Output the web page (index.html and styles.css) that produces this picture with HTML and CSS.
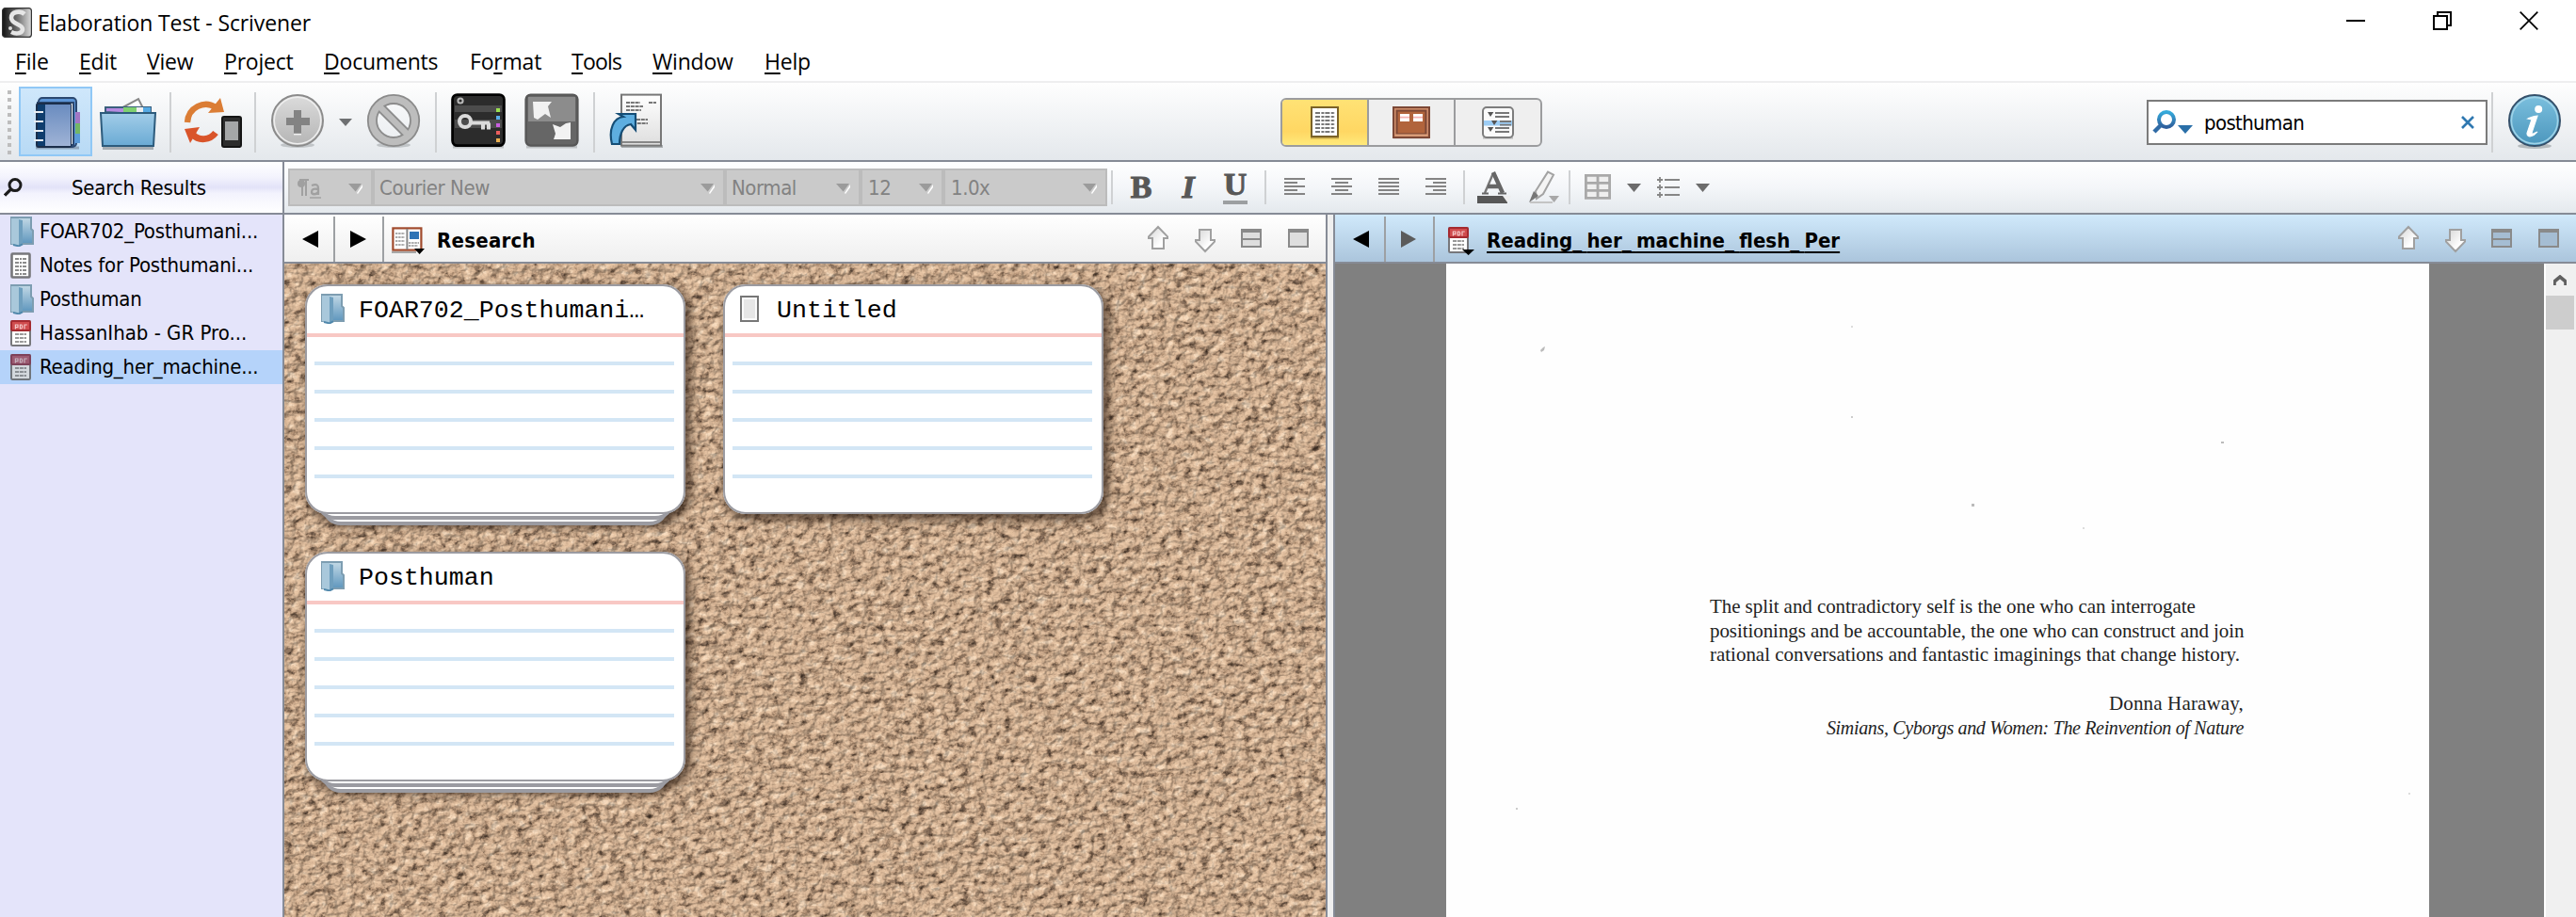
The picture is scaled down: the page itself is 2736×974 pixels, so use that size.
FILE: index.html
```html
<!DOCTYPE html>
<html lang="en">
<head>
<meta charset="utf-8">
<title>Elaboration Test - Scrivener</title>
<link rel="stylesheet" href="styles.css">
</head>
<body>
<svg class="defs" width="0" height="0" aria-hidden="true">
  <defs>
    <linearGradient id="gFolder" x1="0" y1="0" x2="0" y2="1"><stop offset="0" stop-color="#c3d9e6"/><stop offset="1" stop-color="#5e96bd"/></linearGradient>
    <linearGradient id="gBlue" x1="0" y1="0" x2="0" y2="1"><stop offset="0" stop-color="#a2cde8"/><stop offset="1" stop-color="#6aaad4"/></linearGradient>
    <linearGradient id="gBook" x1="0" y1="0" x2="0" y2="1"><stop offset="0" stop-color="#6a8cc0"/><stop offset="1" stop-color="#9fb3d6"/></linearGradient>
    <linearGradient id="gGrey" x1="0" y1="0" x2="0" y2="1"><stop offset="0" stop-color="#dcdcdc"/><stop offset="1" stop-color="#b4b4b4"/></linearGradient>
    <linearGradient id="gPaper" x1="0" y1="0" x2="0" y2="1"><stop offset="0" stop-color="#fff"/><stop offset="1" stop-color="#dedede"/></linearGradient>
    <linearGradient id="gInfo" x1="0" y1="0" x2="0" y2="1"><stop offset="0" stop-color="#7cc0de"/><stop offset="1" stop-color="#4b96bd"/></linearGradient>
    <linearGradient id="gArrow" x1="0" y1="0" x2="1" y2="1"><stop offset="0" stop-color="#d4d4d4"/><stop offset=".7" stop-color="#fff"/></linearGradient>
    <symbol id="folder" viewBox="0 0 13 16"><path d="M1 .5h10.500v6l1 1v7H1z" fill="url(#gFolder)" stroke="#7d9db1"/><path d="M1 1h4v14.500l-4-1z" fill="#a9c8db"/><path d="M5 1.500l2 .5v12.500l-2 1z" fill="#6f9fbe"/><path d="M2 15l3 .7 2-1" stroke="#4f87ab" fill="none"/></symbol>
    <symbol id="text" viewBox="0 0 11 14"><rect x=".75" y=".75" width="9.500" height="12.500" rx=".5" fill="#fff" stroke="#77777b" stroke-width="1.300"/><path d="M2.500 3.500h6M2.500 5.500h6M2.500 7.500h6M2.500 9.500h6M2.500 11.500h6" stroke="#8b8b8b" stroke-dasharray="2 .5 1 .5" /></symbol>
    <symbol id="pdf" viewBox="0 0 11 14"><rect x=".5" y=".5" width="10" height="13" rx=".6" fill="#fff" stroke="#77777b"/><path d="M2.500 7.500h6M2.500 9.500h6M2.500 11.500h6" stroke="#999" stroke-dasharray="2 .4"/><rect x=".5" y=".5" width="10" height="5" rx=".6" fill="#d04c4e" stroke="#a52a30"/><path d="M2.700 4.800v-2.300h1.300v1.300h-1M5.200 2.500v2h.8l.4-1-.4-1zM7.500 4.800v-2.300h1.400" stroke="#f3c9c9" stroke-width=".6" fill="none"/></symbol>
    <symbol id="up" viewBox="0 0 12 14"><path d="M6 1L11 6.200V7H9V12.500H3V7H1V6.200z" fill="url(#gArrow)" stroke="#a0a0a0"/></symbol>
    <symbol id="down" viewBox="0 0 12 14"><path d="M6 13L11 7.800V7H9V1.500H3V7H1V7.800z" fill="url(#gArrow)" stroke="#a0a0a0"/></symbol>
    <symbol id="split" viewBox="0 0 11 10"><path d="M.5 .5h10v9H.5zM.5 5.500h10" fill="var(--pane-fill)" stroke="#8a8a8a"/><path d="M0 1h11" stroke="#8a8a8a" stroke-width="2"/></symbol>
    <symbol id="single" viewBox="0 0 11 10"><path d="M.5 .5h10v9H.5z" fill="var(--pane-fill)" stroke="#8a8a8a"/><path d="M0 1h11" stroke="#8a8a8a" stroke-width="2"/></symbol>
    <symbol id="drop" viewBox="0 0 8 6"><path d="M4.500 5.500L7.500 1v1.500L5 6z" fill="#fff"/><path d="M0 .5h7L3.800 4.800z" fill="#9b9b9b"/></symbol>
  </defs>
</svg>

<header class="titlebar">
  <svg class="app-icon" viewBox="0 0 16 16"><defs><linearGradient id="gApp"><stop offset="0" stop-color="#111"/><stop offset=".55" stop-color="#777"/><stop offset="1" stop-color="#ddd"/></linearGradient></defs><rect x=".3" y=".3" width="15.400" height="15.400" rx="1.500" fill="url(#gApp)" stroke="#333" stroke-width=".6"/><path d="M12 3.500C10 1.500 5 2 5 5.500c0 3.500 6 3 6 6 0 2-3 3-6 1.500" fill="none" stroke="#e6e6e6" stroke-width="2.300"/><circle cx="4.500" cy="11" r="1" fill="#ddd"/></svg>
  <span class="title">Elaboration Test - Scrivener</span>
  <div class="win-buttons">
    <svg viewBox="0 0 20 20"><path d="M0 10h20" stroke="#000" stroke-width="2"/></svg>
    <svg viewBox="0 0 20 20"><path d="M1 5h14v14H1zM5 5V1h14v14h-4" fill="none" stroke="#000" stroke-width="2"/></svg>
    <svg viewBox="0 0 20 20"><path d="M.7.7l18.600 18.600M19.300.7L.7 19.300" stroke="#000" stroke-width="1.700"/></svg>
  </div>
</header>
<nav class="menu">
  <span><u>F</u>ile</span><span><u>E</u>dit</span><span><u>V</u>iew</span><span><u>P</u>roject</span><span><u>D</u>ocuments</span><span>Fo<u>r</u>mat</span><span class="tight"><u>T</u>ools</span><span><u>W</u>indow</span><span><u>H</u>elp</span>
</nav>

<div class="toolbar">
  <div class="grip"></div>
  <div class="tool active">
    <svg width="54" height="58" viewBox="0 0 27 29"><path d="M2 27.500h23" stroke="#8fa5bb" stroke-width="1.500"/><rect x="3.500" y="1" width="20" height="26" rx="2" fill="#5b94d6" stroke="#2b4870"/><path d="M23 8.500h2.500v7H23z" fill="#a377c4"/><path d="M23 14.500h2.500v7H23z" fill="#74b766"/><path d="M23 20h2.500v5H23z" fill="#5b9bd8"/><path d="M3 3.500h19V26H3z" fill="#fff" stroke="#2b4870"/><rect x="2.500" y="4" width="18" height="23" rx="1" fill="#0f3d6d" stroke="#1b2e4a"/><path d="M7 4.500h13.500v22H7z" fill="url(#gBook)"/><path d="M1 8.500h5M1 13.500h5M1 18.500h5M1 23.500h5" stroke="#e9eef3" stroke-width="1.100"/></svg>
  </div>
  <svg class="i-folder" width="62" height="58" viewBox="0 0 31 29"><path d="M9 8l12-6.500 4 8" fill="#fff" stroke="#888"/><path d="M2 27.500h27" stroke="#a6adb3" stroke-width="2"/><path d="M3.500 8.500V6h24v4z" fill="#b58be0" stroke="#3a5f7d"/><path d="M13 6h7v4h-7z" fill="#7fd070"/><path d="M20 6h3.500v4H20z" fill="#eee"/><path d="M23.500 6h4v4h-4z" fill="#55a9e3"/><path d="M1 9h29l-1 17.500H2z" fill="url(#gBlue)" stroke="#2d5b7c"/></svg>
  <i class="sep s1"></i>
  <svg class="i-sync" width="62" height="56" viewBox="0 0 31 28"><path d="M2 14C2.500 6 11 2 17 6" fill="none" stroke="#db7d35" stroke-width="3.200"/><path d="M19.500 1l2 7.500-8.500.5z" fill="#db7d35"/><path d="M17 19.500c-3 4-9 4.500-12 1" fill="none" stroke="#d9542a" stroke-width="3.500"/><path d="M.5 17.500l8-1-5 8.500z" fill="#d9542a"/><rect x="20.500" y="11" width="10" height="16" rx="1" fill="#2d2d2d" stroke="#151515"/><path d="M22 13.500h7v10h-7z" fill="#a5a7a8"/></svg>
  <i class="sep s2"></i>
  <svg class="i-add" width="58" height="60" viewBox="0 0 29 30"><ellipse cx="14.500" cy="27.500" rx="9" ry="1.500" fill="#c1c5c8"/><circle cx="14.500" cy="14.500" r="13.500" fill="url(#gGrey)" stroke="#8b8b8b"/><circle cx="14.500" cy="14.500" r="12.400" fill="none" stroke="#eee" stroke-width=".8"/><path d="M12.500 9h4v4H21v4h-4.500v4.500h-4V17H8.500v-4h4z" fill="#838383"/><path d="M12.500 21.800h4" stroke="#f2f2f2" stroke-width=".8"/></svg>
  <svg class="i-caret" width="14" height="8" viewBox="0 0 14 8"><path d="M0 0h14L7 8z" fill="#6e7072"/></svg>
  <svg class="i-ban" width="58" height="60" viewBox="0 0 29 30"><ellipse cx="14.500" cy="27.500" rx="9" ry="1.500" fill="#c1c5c8"/><circle cx="14.500" cy="14.500" r="11.300" fill="none" stroke="#8b8b8b" stroke-width="5.500"/><path d="M7 7l15 15" stroke="#8b8b8b" stroke-width="5"/><circle cx="14.500" cy="14.500" r="11.300" fill="none" stroke="#bdbdbd" stroke-width="3.700"/><path d="M6.500 6.500l16 16" stroke="#bdbdbd" stroke-width="3.200"/></svg>
  <i class="sep s3"></i>
  <svg class="i-key" width="58" height="60" viewBox="0 0 29 30"><path d="M1 28.500h27" stroke="#bfc3c6" stroke-width="1.500"/><rect x=".8" y=".8" width="27.400" height="27" rx="2.500" fill="#2c2c2c" stroke="#000" stroke-width="1.400"/><path d="M2 6.500h25v3.500H2zM2 14h25v4.500H2z" fill="#4c4c4c"/><circle cx="5" cy="4" r="1.300" fill="none" stroke="#bbb"/><circle cx="7.500" cy="15" r="3" fill="none" stroke="#dadada" stroke-width="2"/><path d="M10.500 15.800h10M17 15.800v3.500M20 15.800v3.500" stroke="#dadada" stroke-width="2"/><path d="M24 8h2v2h-2z" fill="#9be152"/><path d="M24 12h2v2h-2z" fill="#59ade8"/><path d="M24 16h2v2h-2z" fill="#c95fe0"/><path d="M24 20h2v2h-2z" fill="#ec5e5e"/><path d="M24 24h2v2h-2z" fill="#eab050"/></svg>
  <svg class="i-full" width="58" height="60" viewBox="0 0 29 30"><path d="M1 28.500h27" stroke="#bfc3c6" stroke-width="1.500"/><rect x=".8" y=".8" width="27.400" height="27" rx="2.500" fill="#666" stroke="#575757" stroke-width="1.200"/><path d="M2 2h25v13H2z" fill="#8c8c8c"/><path d="M4.500 4.500h10l-2 2.500 1.500 6-3-2-4 3-2-1z" fill="#f2f2f2"/><path d="M24.500 24.500h-9l1-3-1.500-5 4 1.500 3-2 2.500-.5z" fill="#f2f2f2"/></svg>
  <i class="sep s4"></i>
  <svg class="i-doc" width="60" height="60" viewBox="0 0 30 30"><path d="M7 28.300h22" stroke="#a9adb0" stroke-width="1.500"/><rect x="7" y=".8" width="21" height="27" fill="url(#gPaper)" stroke="#777"/><path d="M7.500 26h20" stroke="#888"/><path d="M9.500 5h7.500M21.500 5h4M9.500 7h9M9.500 9h8M15 14h6M13 16h8" stroke="#777" stroke-dasharray="2 .4"/><path d="M2 27C0 19 3 13 8 12.500L5.500 11h9v8.500l-2.500-3c-4 .5-6 5-6 10.500z" fill="#5eaee0" stroke="#154d75" stroke-width="1.100"/></svg>

  <div class="segmented">
    <span class="seg on"><svg width="34" height="36" viewBox="0 0 17 18"><path d="M1 17.300h15" stroke="#c6a94a"/><rect x="1.500" y="1" width="14" height="15.500" fill="#fff" stroke="#7b6227"/><path d="M3.500 4h10.500M3.500 6h10.500M3.500 8h10.500M3.500 10h10.500M3.500 12h10.500M3.500 14h10.500" stroke="#777" stroke-dasharray="2.500 .7 1.500 .5"/></svg></span>
    <span class="seg"><svg width="42" height="36" viewBox="0 0 21 18"><path d="M1 17.300h19" stroke="#cfc8c5"/><rect x="1" y="1" width="19" height="16" fill="#cf8d6b" stroke="#7c4836"/><rect x="2.800" y="2.800" width="15.400" height="12.400" fill="#b1643c" stroke="#7c4836"/><path d="M4.500 4.500h5v4h-5zM11.500 4.500h5v4h-5z" fill="#fff"/><path d="M4.500 6.300h5M11.500 6.300h5" stroke="#f5b3b3" stroke-width=".8"/><path d="M2 15.700h17" stroke="#dca07c"/></svg></span>
    <span class="seg"><svg width="36" height="36" viewBox="0 0 18 18"><path d="M1 17.300h16" stroke="#bbb"/><rect x="1" y="1" width="16" height="16" rx="2" fill="#fafafa" stroke="#7d7d7d"/><path d="M1.500 8h15v2.700h-15z" fill="#9dcdf5"/><path d="M7.500 4h7.500M7.500 6h7.500M10 8.500h6M10 10.300h6M7.500 12h7.500M7.500 14h7.500" stroke="#777" stroke-width=".9"/><path d="M3.500 3.500h3.200L5 6zM5.500 8h3.200L7 10.500zM3.500 11.500h3.200L5 14z" fill="#555"/></svg></span>
  </div>

  <div class="search">
    <svg width="44" height="28" viewBox="0 0 44 28"><defs><linearGradient id="gMag" x1="0" y1="0" x2="0" y2="1"><stop offset="0" stop-color="#35aadb"/><stop offset="1" stop-color="#2f5f9c"/></linearGradient></defs><circle cx="15" cy="11" r="8" fill="none" stroke="url(#gMag)" stroke-width="4"/><path d="M9 17L2 24" stroke="#2f6aa5" stroke-width="4.500"/><path d="M27 17h16l-8 9z" fill="#2a6fa8"/></svg>
    <span class="query">posthuman</span>
    <svg width="14" height="14" viewBox="0 0 14 14"><path d="M1 1l12 12M13 1L1 13" stroke="#2f78b0" stroke-width="2.600"/></svg>
  </div>
  <i class="sep s5"></i>
  <svg class="i-info" width="58" height="60" viewBox="0 0 29 30"><ellipse cx="14.500" cy="28" rx="9" ry="1.500" fill="#b5babd"/><circle cx="14.500" cy="14.500" r="13.500" fill="url(#gInfo)" stroke="#35506a"/><circle cx="14.500" cy="14.500" r="12.300" fill="none" stroke="#9fd3e8" stroke-width=".8"/><circle cx="16.600" cy="8.500" r="2" fill="#fff"/><path d="M11 13.500c2-.8 3.500-1.500 5-1.500l-3 9c0 1 1 .5 3-.5-2 2.500-5.500 3.500-5.500.8l2.500-7.300z" fill="#fff" stroke="#fff" stroke-width=".6"/></svg>
</div>

<main class="workspace">
  <aside class="sidebar">
    <div class="side-head">
      <svg width="20" height="20" viewBox="0 0 10 10"><circle cx="6" cy="3.800" r="3" fill="none" stroke="#1c1c1c" stroke-width="1.500"/><path d="M3.800 6L.5 9.300" stroke="#1c1c1c" stroke-width="1.600"/></svg>
      <span>Search Results</span>
    </div>
    <ul class="results">
      <li><svg class="fo"><use href="#folder"/></svg><span>FOAR702_Posthumani...</span></li>
      <li><svg class="tx"><use href="#text"/></svg><span>Notes for Posthumani...</span></li>
      <li><svg class="fo"><use href="#folder"/></svg><span>Posthuman</span></li>
      <li><svg class="tx"><use href="#pdf"/></svg><span class="loose">HassanIhab - GR Pro...</span></li>
      <li class="sel"><svg class="tx"><use href="#pdf"/></svg><span>Reading_her_machine...</span></li>
    </ul>
  </aside>

  <section class="content">
    <div class="format">
      <div class="combo c1"><svg class="pilcrow" width="26" height="22" viewBox="0 0 26 22"><path d="M9 1v18M5 1v18M2 2h10" stroke="#a0a0a0" stroke-width="2"/><circle cx="4" cy="6" r="4" fill="#a0a0a0"/><path d="M15 8c6-2 7 0 7 3v7M22 12c-5-1-7 0-7 3s5 3 7 0" stroke="#a0a0a0" stroke-width="2.300" fill="none"/><path d="M13 21h12" stroke="#a0a0a0" stroke-width="1.500"/></svg><svg class="dd"><use href="#drop"/></svg></div>
      <div class="combo c2"><span>Courier New</span><svg class="dd"><use href="#drop"/></svg></div>
      <div class="combo c3"><span>Normal</span><svg class="dd"><use href="#drop"/></svg></div>
      <div class="combo c4"><span>12</span><svg class="dd"><use href="#drop"/></svg></div>
      <div class="combo c5"><span>1.0x</span><svg class="dd"><use href="#drop"/></svg></div>
      <i class="fsep f1"></i>
      <b class="fb">B</b><b class="fi">I</b><b class="fu">U</b>
      <i class="fsep f2"></i>
      <svg class="al" viewBox="0 0 11 10"><path d="M0 .5h11M0 2.500h7M0 4.500h11M0 6.500h7M0 8.500h11" stroke="#848484"/></svg>
      <svg class="al" viewBox="0 0 11 10"><path d="M0 .5h11M2 2.500h7M0 4.500h11M2 6.500h7M0 8.500h11" stroke="#848484"/></svg>
      <svg class="al" viewBox="0 0 11 10"><path d="M0 .5h11M0 2.500h11M0 4.500h11M0 6.500h11M0 8.500h11" stroke="#848484"/></svg>
      <svg class="al" viewBox="0 0 11 10"><path d="M0 .5h11M4 2.500h7M0 4.500h11M4 6.500h7M0 8.500h11" stroke="#848484"/></svg>
      <i class="fsep f3"></i>
      <svg class="fa" width="36" height="36" viewBox="0 0 18 18"><path d="M4 12L8.500 1.500" fill="none" stroke="#777" stroke-width="1.200"/><path d="M8.500 1L13.500 12M5.500 8.500h6" fill="none" stroke="#666" stroke-width="2.200"/><path d="M2.500 12.300h3.500M11 12.300h4.500" stroke="#666"/><path d="M0 13.500h16v4H0z" fill="#575757"/><path d="M13.500 13.500h4.500l-2 3.500z" fill="#eee"/></svg>
      <svg class="fp" width="34" height="36" viewBox="0 0 17 18"><path d="M4.500 11L11 .8l3 1.500L8.500 12.500l-3.500 2.500z" fill="#f4f4f4" stroke="#a3a3a3"/><path d="M1 17l2.500-6 2.500 2.500z" fill="#777"/><path d="M1.500 17h12" stroke="#c4c4c4"/><path d="M11.500 13.500h5.500l-2.700 3.500z" fill="#a8a8a8"/></svg>
      <i class="fsep f4"></i>
      <svg class="ft" width="28" height="28" viewBox="0 0 14 14"><path d="M.7.7h12.600v12H.7zM7 .7v12M.7 4.700h12.600M.7 8.700h12.600" fill="#efefef" stroke="#a9a9a9" stroke-width="1.400"/></svg>
      <svg class="fc" width="15" height="9" viewBox="0 0 15 9"><path d="M0 0h15L7.500 9z" fill="#6c6c6c"/></svg>
      <svg class="fl" width="24" height="22" viewBox="0 0 12 11"><path d="M4 1.500h8M4 5.500h8M4 9.500h8" stroke="#868686"/><path d="M0 1.500h3M1.500 0v3M0 5.500h3M1.500 4v3M0 9.500h3M1.500 8v3" stroke="#868686" stroke-width=".9"/></svg>
      <svg class="fc" width="15" height="9" viewBox="0 0 15 9"><path d="M0 0h15L7.500 9z" fill="#6c6c6c"/></svg>
    </div>

    <div class="panes">
      <section class="pane left">
        <div class="pane-head">
          <span class="nav"><svg width="18" height="18" viewBox="0 0 18 18"><path d="M17 0v18L0 9z"/></svg></span>
          <span class="nav"><svg width="18" height="18" viewBox="0 0 18 18"><path d="M1 0v18l17-9z"/></svg></span>
          <svg class="h-book" width="36" height="30" viewBox="0 0 18 15"><path d="M0 13.500h13" stroke="#a7a7a7"/><rect x=".7" y=".7" width="15" height="11.600" fill="#fff" stroke="#a04a2c" stroke-width="1.100"/><path d="M8.200 1v11" stroke="#888"/><path d="M2 3.500h5M2 5.500h5M2 7.500h5M2 9.500h5M9 8.500h5.500M9 10h5" stroke="#aaa" stroke-dasharray="1.200 .4"/><path d="M9.500 2.500h5v4h-5z" fill="#2f74b5"/><path d="M12 11.500h5.500l-2.700 3z" fill="#000"/></svg>
          <b class="pane-title plain">Research</b>
          <span class="pane-tools"><svg class="ar"><use href="#up"/></svg><svg class="ar dn"><use href="#down"/></svg><svg class="sq"><use href="#split"/></svg><svg class="sq"><use href="#single"/></svg></span>
        </div>
        <div class="cork">
          <svg class="cork-tex" width="1106" height="694">
            <filter id="corkFx" x="0" y="0" width="100%" height="100%" color-interpolation-filters="sRGB">
              <feTurbulence type="fractalNoise" baseFrequency=".11 .13" numOctaves="5" seed="11" result="n"/>
              <feDiffuseLighting in="n" surfaceScale="5" diffuseConstant="1.15" lighting-color="#dfc0a2" result="lit"><feDistantLight azimuth="225" elevation="58"/></feDiffuseLighting>
              <feColorMatrix in="n" values="1.7 0 -.9 0 .1  1.7 0 -.9 0 .1  1.7 0 -.9 0 .1  0 0 0 0 1"/>
              <feComponentTransfer result="tone">
                <feFuncR type="table" tableValues=".28 .52 .70 .78 .82 .86 .93"/>
                <feFuncG type="table" tableValues=".20 .40 .57 .65 .69 .74 .84"/>
                <feFuncB type="table" tableValues=".15 .30 .46 .53 .57 .62 .74"/>
              </feComponentTransfer>
              <feComposite in="tone" in2="lit" operator="arithmetic" k1="0" k2=".62" k3=".4" k4="0"/>
            </filter>
            <rect width="1106" height="694" filter="url(#corkFx)"/>
          </svg>
          <div class="cards">
            <article class="card stack"><div class="face"><h3><svg class="fo"><use href="#folder"/></svg><span>FOAR702_Posthumani…</span></h3><div class="rules"><i></i><i></i><i></i><i></i><i></i></div></div></article>
            <article class="card"><div class="face"><h3><svg class="blank" viewBox="0 0 10 14"><rect x=".5" y=".5" width="9" height="13" fill="#e6e6e6" stroke="#777"/><rect x="1.500" y="1.500" width="7" height="11" fill="none" stroke="#fafafa"/></svg><span>Untitled</span></h3><div class="rules"><i></i><i></i><i></i><i></i><i></i></div></div></article>
            <article class="card stack"><div class="face"><h3><svg class="fo"><use href="#folder"/></svg><span>Posthuman</span></h3><div class="rules"><i></i><i></i><i></i><i></i><i></i></div></div></article>
          </div>
        </div>
      </section>
      <div class="splitter"></div>
      <section class="pane right">
        <div class="pane-head focus">
          <span class="nav"><svg width="18" height="18" viewBox="0 0 18 18"><path d="M18 0v18L1 9z"/></svg></span>
          <span class="nav"><svg width="18" height="18" viewBox="0 0 18 18"><path d="M1 0v18l16-9z" fill="#5b5b5b"/></svg></span>
          <svg class="h-pdf" width="28" height="30" viewBox="0 0 14 15"><use href="#pdf" width="11" height="14"/><path d="M7.500 12h6.500l-3.200 3z" fill="#000"/></svg>
          <b class="pane-title ul">Reading<s>_</s>her<s>_</s>machine<s>_</s>flesh<s>_</s>Per</b>
          <span class="pane-tools"><svg class="ar"><use href="#up"/></svg><svg class="ar dn"><use href="#down"/></svg><svg class="sq"><use href="#split"/></svg><svg class="sq"><use href="#single"/></svg></span>
        </div>
        <div class="viewer">
          <div class="page">
            <svg class="specks" width="1044" height="694"><g fill="#bbb"><path d="M100 92l3-3 2-1-1 4-3 2z"/><rect x="430" y="66" width="2" height="2" fill="#ddd"/><rect x="430" y="162" width="2" height="2" fill="#ccc"/><rect x="823" y="189" width="3" height="2"/><rect x="558" y="255" width="3" height="3"/><rect x="676" y="280" width="2" height="2" fill="#ddd"/><rect x="74" y="578" width="2" height="2" fill="#ccc"/><rect x="1022" y="562" width="2" height="2" fill="#ddd"/></g></svg>
            <blockquote>
              <p>The split and contradictory self is the one who can interrogate<br>positionings and be accountable, the one who can construct and join<br><span class="q3">rational conversations and fantastic imaginings that change history.</span></p>
              <footer>Donna Haraway,<br><cite>Simians, Cyborgs and Women: The Reinvention of Nature</cite></footer>
            </blockquote>
          </div>
          <div class="scroll"><svg width="14" height="12" viewBox="0 0 7 6"><path d="M.5 5.500v-2L3.500 1l3 2.500v2" fill="none" stroke="#606060" stroke-width="1.800"/></svg><div class="thumb"></div></div>
        </div>
      </section>
    </div>
  </section>
</main>
</body>
</html>
```
FILE: styles.css
```css
* { box-sizing: border-box; }
body { margin: 0; width: 2736px; height: 974px; overflow: hidden; background: #fff; color: #000; font: 22px "DejaVu Sans Condensed", "DejaVu Sans", sans-serif; font-stretch: condensed; display: flex; flex-direction: column; }
svg { display: block; flex: none; }
.defs { position: absolute; }

.titlebar { height: 48px; display: flex; align-items: center; flex: none; font: 23px/48px "Open Sans", sans-serif; letter-spacing: -.11px; white-space: nowrap; }
.app-icon { width: 32px; height: 32px; margin: 0 6px 0 2px; }
.win-buttons { margin: -4px 40px 0 auto; display: flex; gap: 72px; }
.win-buttons svg { width: 20px; height: 20px; }
.menu { height: 38px; flex: none; padding-left: 16px; font: 23px/34px "Open Sans", sans-serif; letter-spacing: -.2px; display: grid; grid-template-columns: 68px 72px 82px 106px 155px 108px 86px 119px 60px; white-space: nowrap; }
.menu .tight { letter-spacing: -.8px; }
.menu u { text-decoration-thickness: 2px; text-underline-offset: 3px; }

.toolbar { height: 86px; flex: none; border-top: 2px solid #eeeeef; border-bottom: 2px solid #868b96; background: linear-gradient(#fefefe, #e4e8ec); display: flex; align-items: flex-start; padding-left: 8px; }
.grip { width: 4px; height: 68px; margin-top: 8px; background: repeating-linear-gradient(#bdbdbd 0 4px, transparent 4px 8px); }
.tool { width: 78px; height: 74px; margin: 4px 0 0 8px; padding: 8px 0 0 12px; }
.tool.active { border: 2px solid #90c8f6; background: linear-gradient(#cfe7fb, #b8daf5); }
.sep { width: 2px; height: 64px; margin-top: 10px; background: #cfd1d3; flex: none; }
.i-folder { margin: 14px 0 0 7px; }
.s1 { margin-left: 13px; }
.i-sync { margin: 14px 0 0 13px; }
.s2 { margin-left: 13px; }
.i-add { margin: 11px 0 0 15px; }
.i-caret { margin: 38px 0 0 15px; }
.i-ban { margin: 11px 0 0 15px; }
.s3 { margin-left: 15px; }
.i-key { margin: 11px 0 0 15px; }
.i-full { margin: 11px 0 0 20px; }
.s4 { margin-left: 15px; }
.i-doc { margin: 11px 0 0 14px; }
.segmented { margin: 16px 0 0 654px; width: 278px; height: 52px; border: 2px solid #9b9c9e; border-radius: 6px; background: #efefef; display: grid; grid-template-columns: 92px 92px 1fr; overflow: hidden; }
.seg { display: flex; justify-content: center; padding-top: 6px; border-right: 2px solid #9b9c9e; }
.seg:last-child { border-right: 0; }
.seg.on { background: linear-gradient(#ffe275, #ffd763 70%, #ffe97a); }
.search { margin: 18px 0 0 642px; width: 362px; height: 48px; border: 2px solid #7b7b7b; background: #fff; display: flex; align-items: center; padding: 0 12px 0 4px; line-height: 44px; letter-spacing: -.64px; }
.query { flex: 1; padding: 2px 0 0 11px; }
.s5 { margin-left: 4px; }
.i-info { margin: 11px 0 0 15px; }

.workspace { flex: 1; display: flex; min-height: 0; }
.sidebar { width: 302px; border-right: 2px solid #868b96; background: #e4e4fa; flex: none; letter-spacing: -.2px; }
.side-head { height: 56px; border-bottom: 2px solid #868b96; background: linear-gradient(#fff, #f3f3fd 30%, #e3e3f8 50%, #f3f3fd 62%, #fff); display: flex; align-items: center; padding-left: 4px; gap: 52px; line-height: 54px; white-space: nowrap; }
.side-head span { padding-top: 1px; }
.results { list-style: none; margin: 0; padding: 0; }
.results li { height: 36px; line-height: 36px; display: grid; grid-template-columns: 32px 1fr; align-items: center; padding-left: 10px; white-space: nowrap; }
.results .sel { background: #b5d3fa; }
.results .sel svg { filter: brightness(.85) hue-rotate(-15deg) saturate(.7); opacity: .85; }
.results .loose { letter-spacing: 0; }
.fo { width: 26px; height: 32px; }
.tx { width: 22px; height: 28px; margin-left: 1px; }

.content { flex: 1; display: flex; flex-direction: column; min-width: 0; }
.format { height: 56px; flex: none; border-bottom: 2px solid #868b96; background: linear-gradient(#fff, #f4f6f9 50%, #e4e9ed); display: flex; align-items: center; padding-left: 4px; }
.combo { height: 40px; border: 2px solid #bcbcbc; background: #cacaca; color: #828282; display: flex; align-items: center; justify-content: space-between; line-height: 36px; padding: 1px 8px 0 5px; white-space: nowrap; letter-spacing: -.45px; }
.pilcrow { margin-left: 3px; }
.dd { width: 16px; height: 12px; }
.c1 { width: 90px; } .c2 { width: 374px; } .c3 { width: 144px; } .c4 { width: 88px; padding-left: 6px; } .c5 { width: 174px; padding-left: 6px; }
.fsep { width: 2px; height: 36px; background: #cfd1d3; flex: none; }
.f1 { margin-left: 4px; }
.format b { font: bold 34px/40px "Liberation Serif", serif; color: #575757; text-align: center; -webkit-text-stroke: 1px #575757; }
.fb { width: 26px; margin-left: 17px; }
.format .fi { width: 22px; margin-left: 26px; font-style: italic; }
.format .fu { width: 26px; height: 36px; line-height: 30px; margin-left: 26px; border-bottom: 4px solid #9c9fa1; }
.f2 { margin-left: 18px; }
.al { width: 22px; height: 20px; margin-left: 28px; }
.f2 + .al { margin-left: 19px; }
.f3 { margin-left: 18px; }
.fa { margin-left: 13px; }
.fp { margin-left: 17px; }
.f4 { margin-left: 10px; }
.ft { margin-left: 15px; }
.fc { margin-left: 17px; }
.fl { margin-left: 17px; }

.panes { flex: 1; display: flex; min-height: 0; }
.pane { display: flex; flex-direction: column; }
.left { width: 1108px; border-right: 2px solid #868b96; --pane-fill: #dedede; }
.splitter { width: 8px; background: #efefef; border-right: 2px solid #868b96; flex: none; }
.right { flex: 1; --pane-fill: #a5bdd3; }
.pane-head { height: 52px; flex: none; border-bottom: 2px solid #868b96; background: linear-gradient(#fff, #efefef); display: flex; align-items: center; }
.pane-head.focus { background: linear-gradient(#d0e9fb, #abc5dc); }
.nav { height: 48px; margin-top: 2px; width: 54px; border-right: 2px solid #9da0a3; display: flex; align-items: center; padding-left: 19px; }
.left .nav + .nav { width: 52px; padding-left: 15px; }
.focus .nav { padding-left: 18px; }
.focus .nav + .nav { width: 52px; padding-left: 15px; }
.h-book { margin: 5px 0 0 8px; }
.h-pdf { margin: 5px 0 0 14px; }
.pane-title { padding-top: 5px; margin-left: 13px; white-space: nowrap; font-size: 22px; }
.plain { margin-left: 12px; letter-spacing: .27px; }
.ul { text-decoration: underline; text-decoration-thickness: 2px; text-underline-offset: 4px; text-decoration-skip-ink: none; }
.ul s { text-decoration: none; letter-spacing: 5.3px; }
.pane-tools { margin-left: auto; display: flex; align-items: center; padding-right: 18px; }
.ar { width: 24px; height: 28px; }
.dn { margin: 4px 26px 0 26px; }
.sq { width: 22px; height: 20px; }
.sq + .sq { margin-left: 28px; }

.cork { flex: 1; position: relative; overflow: hidden; background: #bf9d7d; }
.cork-tex { position: absolute; inset: 0; }
.cards { position: relative; display: grid; grid-template-columns: 404px 404px; gap: 40px; padding: 22px 0 0 22px; }
.card { height: 244px; border-radius: 24px; box-shadow: 4px 5px 8px 2px rgba(40, 25, 15, .6); background: #fff; position: relative; }
.face { position: relative; height: 244px; border: 2px solid #9b9ba1; border-radius: 24px; background: #fff; z-index: 1; }
.stack::before, .stack::after { content: ""; position: absolute; border: 2px solid #9b9ba1; border-bottom-width: 4px; background: #fff; border-radius: 20px; }
.stack::before { left: 18px; right: 18px; top: 30px; bottom: -12px; box-shadow: 3px 3px 6px rgba(40, 25, 15, .5); }
.stack::after { left: 12px; right: 12px; top: 30px; bottom: -6px; }
.face h3 { margin: 0; height: 54px; border-bottom: 4px solid #f8c8c4; display: grid; grid-template-columns: 41px 1fr; align-items: center; padding-left: 14px; font: 26.6px/45px "Courier New", "Liberation Mono", monospace; white-space: nowrap; }
.face h3 span { padding-top: 2px; }
.face h3 svg { margin-top: -2px; }
.blank { width: 20px; height: 28px; margin-left: 2px; }
.rules { padding: 26px 10px 0 8px; display: grid; gap: 26px; }
.rules i { height: 4px; background: #d3e6f5; }

.viewer { flex: 1; display: flex; background: #808080; padding-left: 118px; min-height: 0; }
.page { position: relative; width: 1044px; background: #fefefe; }
.specks { position: absolute; inset: 0; }
blockquote { margin: 352px 0 0 280px; width: 567px; font: 21px/25.7px "Liberation Serif", serif; letter-spacing: -.07px; color: #222; white-space: nowrap; }
blockquote p { margin: 0; }
.q3 { letter-spacing: -.02px; }
blockquote footer { margin-top: 25.7px; text-align: right; letter-spacing: .15px; }
cite { font-size: 20px; letter-spacing: -.34px; }
.scroll { margin-left: 122px; width: 34px; border-left: 2px solid #fff; background: #f0f0f0; padding-top: 12px; }
.scroll svg { margin-left: 8px; }
.thumb { width: 30px; height: 36px; margin-top: 10px; background: #cdcdcd; }
```
